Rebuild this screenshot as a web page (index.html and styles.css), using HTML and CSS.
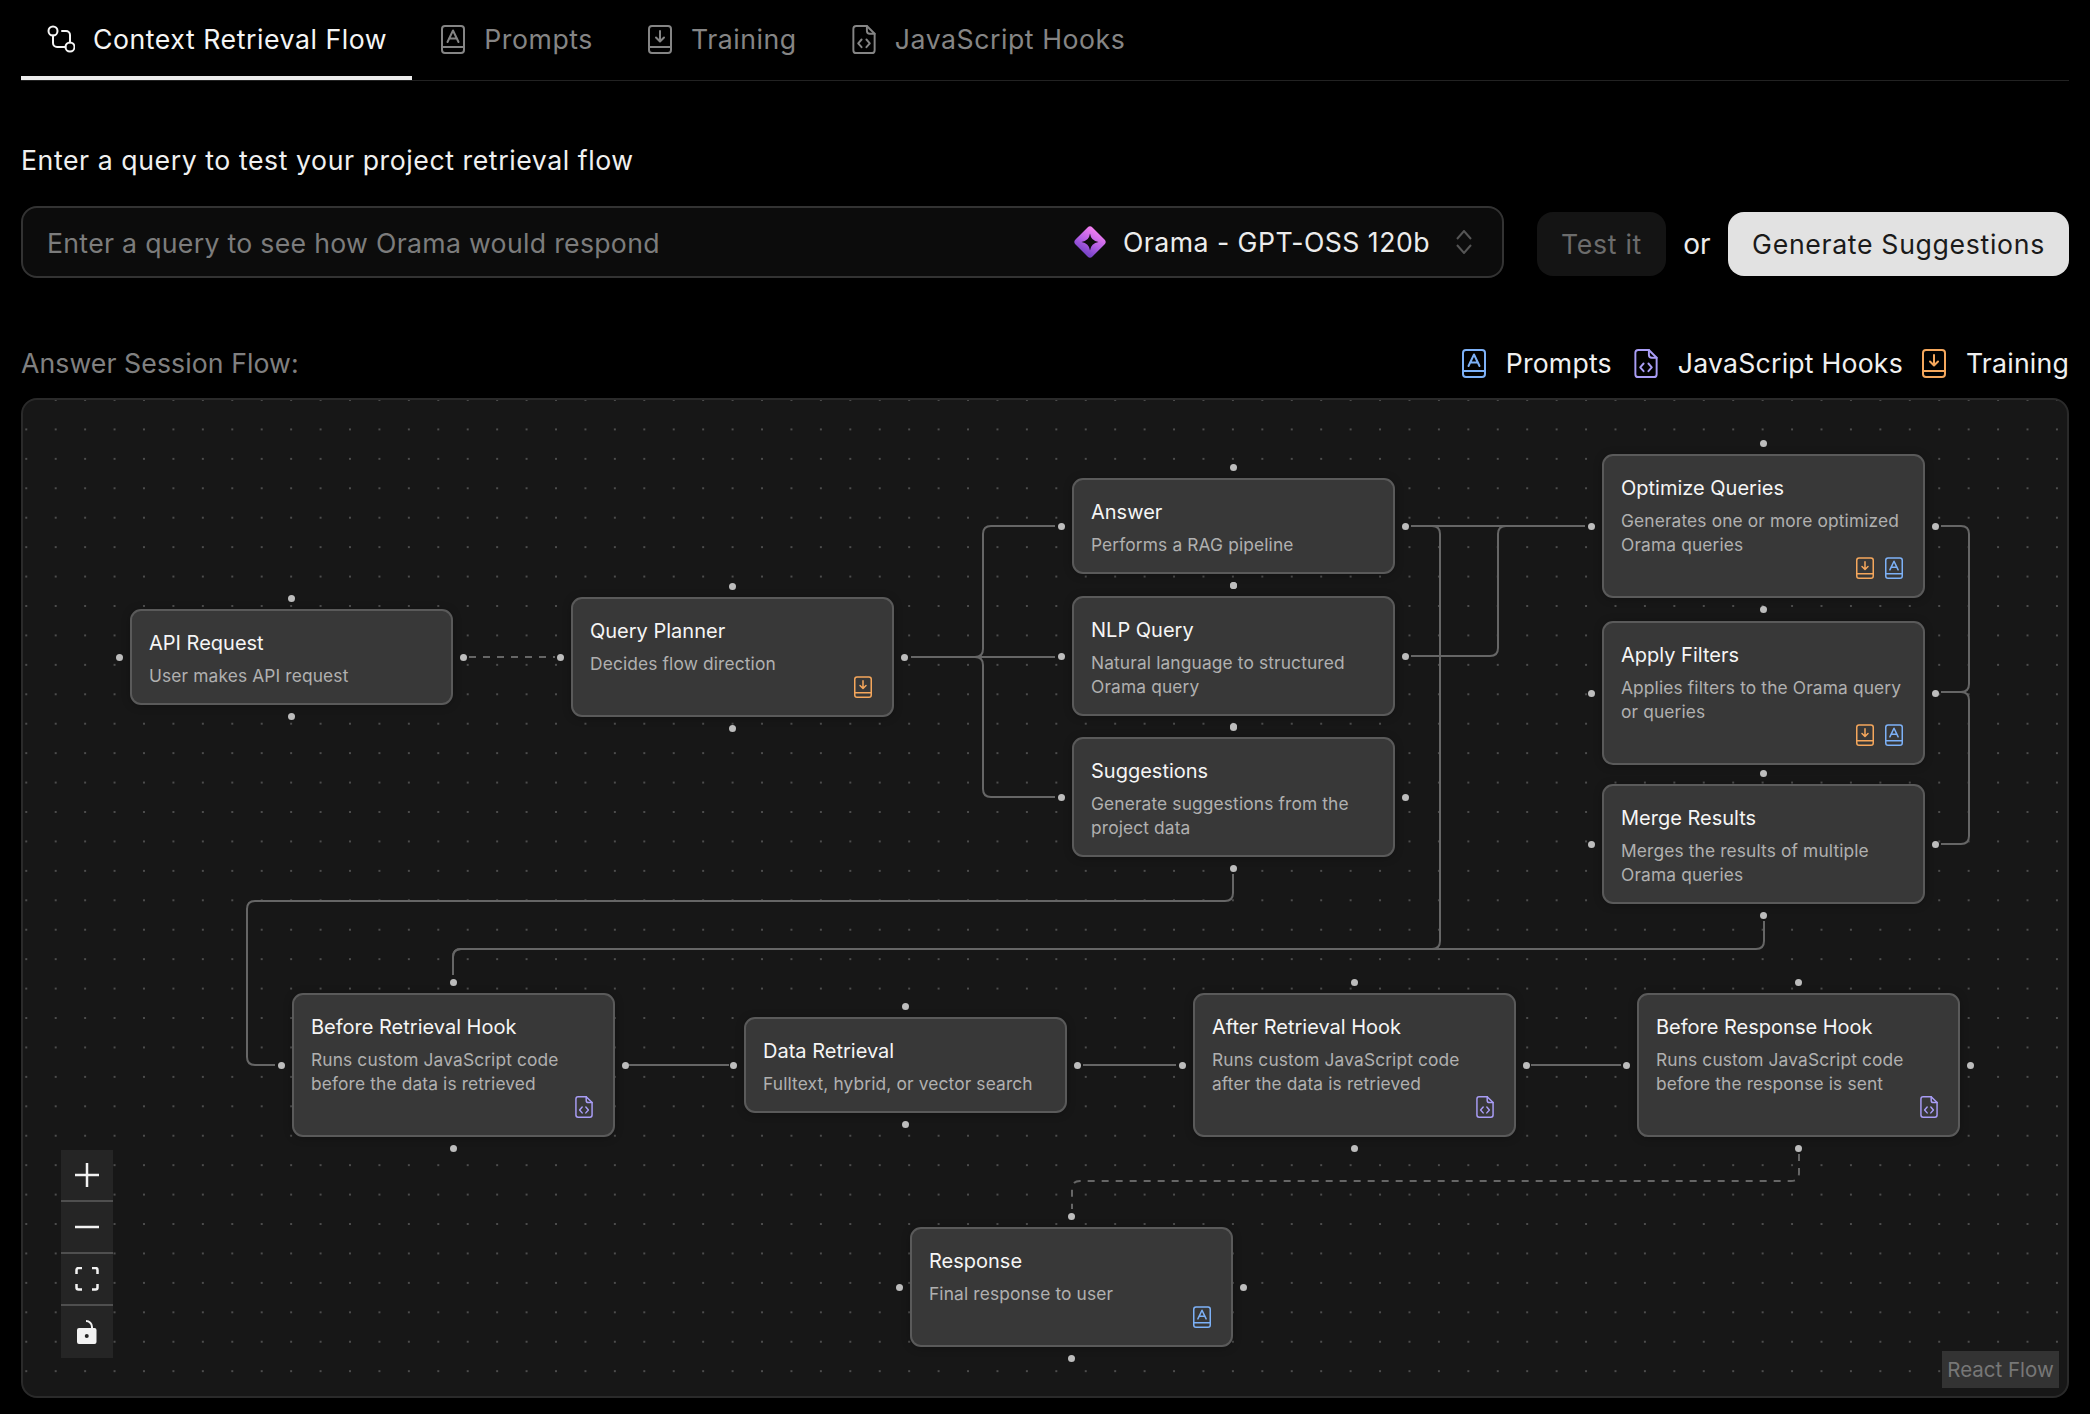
FILE: index.html
```html
<!DOCTYPE html>
<html lang="en">
<head>
    <meta charset="UTF-8">
    <meta name="viewport" content="width=device-width, initial-scale=1.0">
    <title>Context Retrieval Flow</title>
    <link rel="stylesheet" href="styles.css">
</head>
<body>
    <svg class="sprites" width="0" height="0">
        <symbol id="i-book-a" viewBox="0 0 24 29">
            <rect x="1" y="1" width="22" height="27" rx="3"/>
            <path d="M1 22h22M6.5 17 12 5.5 17.5 17M8 13.5h8"/>
        </symbol>
        <symbol id="i-book-down" viewBox="0 0 24 29">
            <rect x="1" y="1" width="22" height="27" rx="3"/>
            <path d="M1 22h22M12 6v10M8 12.5l4 4 4-4"/>
        </symbol>
        <symbol id="i-file-code" viewBox="0 0 24 30">
            <path d="M4 1h11l8 8v17a3 3 0 0 1-3 3H4a3 3 0 0 1-3-3V4a3 3 0 0 1 3-3z"/>
            <path d="M15 1v5a3 3 0 0 0 3 3h5M9.5 15l-3.5 4 3.5 4M14.5 15l3.5 4-3.5 4"/>
        </symbol>
    </svg>

    <main class="page">
        <nav class="tabs">
            <a class="tab active">
                <svg class="tab-flow" viewBox="0 0 28 28"><circle cx="6" cy="6" r="4.5"/><circle cx="23" cy="22" r="4.5"/><path d="M6 10.5V18a4 4 0 0 0 4 4h8.500M15 6h4a4 4 0 0 1 4 4v7.500"/></svg>
                Context Retrieval Flow
            </a>
            <a class="tab"><svg class="icon"><use href="#i-book-a"/></svg>Prompts</a>
            <a class="tab"><svg class="icon"><use href="#i-book-down"/></svg>Training</a>
            <a class="tab"><svg class="icon"><use href="#i-file-code"/></svg>JavaScript Hooks</a>
        </nav>

        <h2 class="query-title">Enter a query to test your project retrieval flow</h2>

        <div class="query-row">
            <div class="query-box">
                <span class="placeholder">Enter a query to see how Orama would respond</span>
                <svg class="model-logo" viewBox="0 0 34 34">
                    <defs>
                        <linearGradient id="logo-grad" x1="0.3" y1="0" x2="0.6" y2="1">
                            <stop offset="0" stop-color="#f07ef0"/>
                            <stop offset="0.55" stop-color="#b45fe6"/>
                            <stop offset="1" stop-color="#7a45c8"/>
                        </linearGradient>
                    </defs>
                    <rect x="5" y="5" width="24" height="24" rx="3.500" transform="rotate(45 17 17)" fill="url(#logo-grad)"/>
                    <path d="M17 8.500Q18 16 25.500 17 18 18 17 25.500 16 18 8.500 17 16 16 17 8.500z" fill="#0c0c0c"/>
                </svg>
                <span class="model-name">Orama - GPT-OSS 120b</span>
                <svg class="model-chevrons" viewBox="0 0 16 24"><path d="M1 9l7-8 7 8M1 15l7 8 7-8"/></svg>
            </div>
            <button class="btn btn-test">Test it</button>
            <span class="or">or</span>
            <button class="btn btn-generate">Generate Suggestions</button>
        </div>

        <div class="flow-head">
            <span class="flow-title">Answer Session Flow:</span>
            <div class="legend">
                <span class="legend-item"><svg class="icon blue"><use href="#i-book-a"/></svg>Prompts</span>
                <span class="legend-item"><svg class="icon violet"><use href="#i-file-code"/></svg>JavaScript Hooks</span>
                <span class="legend-item"><svg class="icon orange"><use href="#i-book-down"/></svg>Training</span>
            </div>
        </div>

        <section class="flow">
            <!-- viewBox is in page coordinates, easier to read off the edges -->
            <svg class="flow-canvas" viewBox="23 400 2044 996">
                <defs>
                    <pattern id="dots" x="55.7" y="517.7" width="29.43" height="29.43" patternUnits="userSpaceOnUse">
                        <circle cx="0" cy="0" r="1" fill="#5e5e5e"/>
                        <circle cx="29.43" cy="0" r="1" fill="#5e5e5e"/>
                        <circle cx="0" cy="29.43" r="1" fill="#5e5e5e"/>
                        <circle cx="29.43" cy="29.43" r="1" fill="#5e5e5e"/>
                    </pattern>
                </defs>
                <rect x="23" y="400" width="2044" height="996" fill="url(#dots)"/>
                <g class="edges">
                    <path class="dashed" d="M469 657H555"/>
                    <path d="M911 657H975q8 0 8-8V534q0-8 8-8H1055"/>
                    <path d="M911 657H1055"/>
                    <path d="M911 657H975q8 0 8 8V789q0 8 8 8H1055"/>
                    <path d="M1411 526H1585"/>
                    <path d="M1411 656H1490q8 0 8-8V534q0-8 8-8H1585"/>
                    <path d="M1411 526H1432q8 0 8 8V941q0 8-8 8H461q-8 0-8 8V975"/>
                    <path d="M1764 921V941q0 8-8 8H461q-8 0-8 8V975"/>
                    <path d="M1233 874V893q0 8-8 8H255q-8 0-8 8V1057q0 8 8 8H275"/>
                    <path d="M1941 526H1961q8 0 8 8V684q0 8-8 8H1941"/>
                    <path d="M1941 844H1961q8 0 8-8V700q0-8-8-8H1941"/>
                    <path d="M629 1065H729"/>
                    <path d="M1083 1065H1176"/>
                    <path d="M1531 1065H1621"/>
                    <path class="dashed" d="M1799 1154V1173q0 8-8 8H1080q-8 0-8 8V1209"/>
                </g>
            </svg>

            <div class="node n-api h-96">
                <h4>API Request</h4>
                <p>User makes API request</p>
                <i class="handle t"></i><i class="handle r"></i><i class="handle b"></i><i class="handle l"></i>
            </div>
            <div class="node n-planner h-120">
                <h4>Query Planner</h4>
                <p>Decides flow direction</p>
                <div class="node-icons"><svg class="icon orange"><use href="#i-book-down"/></svg></div>
                <i class="handle t"></i><i class="handle r"></i><i class="handle b"></i><i class="handle l"></i>
            </div>
            <div class="node n-answer h-96">
                <h4>Answer</h4>
                <p>Performs a RAG pipeline</p>
                <i class="handle t"></i><i class="handle r"></i><i class="handle b"></i><i class="handle l"></i>
            </div>
            <div class="node n-nlp h-120">
                <h4>NLP Query</h4>
                <p>Natural language to structured Orama query</p>
                <i class="handle t"></i><i class="handle r"></i><i class="handle b"></i><i class="handle l"></i>
            </div>
            <div class="node n-suggestions h-120">
                <h4>Suggestions</h4>
                <p>Generate suggestions from the project data</p>
                <i class="handle t"></i><i class="handle r"></i><i class="handle b"></i><i class="handle l"></i>
            </div>
            <div class="node n-optimize h-144">
                <h4>Optimize Queries</h4>
                <p>Generates one or more optimized Orama queries</p>
                <div class="node-icons"><svg class="icon orange"><use href="#i-book-down"/></svg><svg class="icon blue"><use href="#i-book-a"/></svg></div>
                <i class="handle t"></i><i class="handle r"></i><i class="handle b"></i><i class="handle l"></i>
            </div>
            <!-- top and bottom handles of this one sit on its neighbours' handles -->
            <div class="node n-apply h-144">
                <h4>Apply Filters</h4>
                <p>Applies filters to the Orama query or queries</p>
                <div class="node-icons"><svg class="icon orange"><use href="#i-book-down"/></svg><svg class="icon blue"><use href="#i-book-a"/></svg></div>
                <i class="handle r"></i><i class="handle l"></i>
            </div>
            <div class="node n-merge h-120">
                <h4>Merge Results</h4>
                <p>Merges the results of multiple Orama queries</p>
                <i class="handle t"></i><i class="handle r"></i><i class="handle b"></i><i class="handle l"></i>
            </div>
            <div class="node n-before-retrieval h-144">
                <h4>Before Retrieval Hook</h4>
                <p>Runs custom JavaScript code before the data is retrieved</p>
                <div class="node-icons"><svg class="icon violet"><use href="#i-file-code"/></svg></div>
                <i class="handle t"></i><i class="handle r"></i><i class="handle b"></i><i class="handle l"></i>
            </div>
            <div class="node n-data h-96">
                <h4>Data Retrieval</h4>
                <p>Fulltext, hybrid, or vector search</p>
                <i class="handle t"></i><i class="handle r"></i><i class="handle b"></i><i class="handle l"></i>
            </div>
            <div class="node n-after h-144">
                <h4>After Retrieval Hook</h4>
                <p>Runs custom JavaScript code after the data is retrieved</p>
                <div class="node-icons"><svg class="icon violet"><use href="#i-file-code"/></svg></div>
                <i class="handle t"></i><i class="handle r"></i><i class="handle b"></i><i class="handle l"></i>
            </div>
            <div class="node n-before-response h-144">
                <h4>Before Response Hook</h4>
                <p>Runs custom JavaScript code before the response is sent</p>
                <div class="node-icons"><svg class="icon violet"><use href="#i-file-code"/></svg></div>
                <i class="handle t"></i><i class="handle r"></i><i class="handle b"></i><i class="handle l"></i>
            </div>
            <div class="node n-response h-120">
                <h4>Response</h4>
                <p>Final response to user</p>
                <div class="node-icons"><svg class="icon blue"><use href="#i-book-a"/></svg></div>
                <i class="handle t"></i><i class="handle r"></i><i class="handle b"></i><i class="handle l"></i>
            </div>

            <div class="controls">
                <button class="control"><svg viewBox="0 0 24 24"><path d="M12 0v24M0 12h24"/></svg></button>
                <button class="control"><svg viewBox="0 0 24 24"><path d="M0 12h24"/></svg></button>
                <button class="control"><svg viewBox="0 0 24 24"><path d="M1.500 7V3a2 2 0 0 1 2-2h3.500M17 1h3.500a2 2 0 0 1 2 2v4M22.500 17v3.500a2 2 0 0 1-2 2H17M7 22.500H3.500a2 2 0 0 1-2-2V17"/></svg></button>
                <button class="control"><svg viewBox="0 0 24 24"><path class="lock-shackle" d="M11 1a6 6 0 0 1 6 6v1.500"/><path class="lock-body" fill-rule="evenodd" d="M4 8h15.500a2 2 0 0 1 2 2v12a2 2 0 0 1-2 2H4a2 2 0 0 1-2-2V10a2 2 0 0 1 2-2zM11.750 14a2 2 0 1 0 0 4 2 2 0 0 0 0-4z"/></svg></button>
            </div>
            <div class="attribution">React Flow</div>
        </section>
    </main>
</body>
</html>
```

FILE: styles.css
```css
* {
    box-sizing: border-box;
}
body {
    margin: 0;
    background: #000;
    color: #f2f2f2;
    font-family: Inter, "Liberation Sans", sans-serif;
}
.sprites {
    position: absolute;
}
.icon {
    width: 24px;
    height: 29px;
    flex: none;
    fill: none;
    stroke: currentColor;
    stroke-width: 2;
    stroke-linecap: round;
    stroke-linejoin: round;
}
.blue { color: #7db1f7; }
.violet { color: #a99df6; }
.orange { color: #f5a75c; }

.page {
    padding: 0 21px;
}

/* tabs */
.tabs {
    display: flex;
    height: 81px;
    border-bottom: 1px solid #222;
}
.tab {
    display: flex;
    align-items: center;
    gap: 19px;
    height: 80px;
    padding: 2px 26px 0 29px;
    font-size: 26.67px;
    letter-spacing: 0.55px;
    color: #858585;
    border-bottom: 4px solid transparent;
}
.tab.active {
    gap: 18px;
    padding-left: 26px;
    padding-right: 25px;
    color: #f5f5f5;
    border-bottom-color: #ececec;
}
.tab-flow {
    width: 28px;
    height: 28px;
    fill: none;
    stroke: currentColor;
    stroke-width: 2;
    stroke-linecap: round;
}

/* query */
.query-title {
    margin: 61px 0 28px;
    font-size: 26.67px;
    line-height: 36px;
    font-weight: 400;
    letter-spacing: 0.57px;
    color: #f0f0f0;
}
.query-row {
    display: flex;
    align-items: center;
    height: 72px;
}
.query-box {
    display: flex;
    align-items: center;
    width: 1483px;
    height: 72px;
    padding: 0 30px 0 24px;
    background: #0c0c0c;
    border: 2px solid #333;
    border-radius: 16px;
}
.placeholder {
    flex: 1;
    margin-top: 2px;
    font-size: 26.67px;
    letter-spacing: 0.3px;
    color: #7c7c7c;
}
.model-logo {
    width: 34px;
    height: 34px;
    margin-right: 16px;
}
.model-name {
    font-size: 26.67px;
    letter-spacing: 0.47px;
    color: #ececec;
}
.model-chevrons {
    width: 16px;
    height: 24px;
    margin-left: 26px;
    fill: none;
    stroke: #555;
    stroke-width: 2;
}
.btn {
    height: 64px;
    margin-top: 4px;
    border: 0;
    border-radius: 16px;
    font-family: inherit;
    font-size: 26.67px;
    letter-spacing: 0.67px;
}
.btn-test {
    width: 129px;
    margin-left: 33px;
    background: #141414;
    color: #6c6c6c;
}
.or {
    width: 62px;
    margin-top: 4px;
    text-align: center;
    font-size: 28px;
    color: #ececec;
}
.btn-generate {
    width: 341px;
    background: #e2e2e2;
    color: #1a1a1a;
}

/* flow header */
.flow-head {
    display: flex;
    justify-content: space-between;
    align-items: center;
    height: 36px;
    margin: 67px 0 17px;
}
.flow-title {
    font-size: 26.67px;
    letter-spacing: 0.07px;
    color: #808080;
}
.legend {
    display: flex;
    gap: 19px;
}
.legend-item {
    display: flex;
    align-items: center;
    gap: 20px;
    font-size: 26.67px;
    letter-spacing: 0.2px;
    color: #f0f0f0;
}
.legend-item:first-child {
    margin-right: 3px;
}

/* flow canvas */
.flow {
    position: relative;
    height: 1000px;
    background: #171717;
    border: 2px solid #2a2a2a;
    border-radius: 16px;
    overflow: hidden;
}
.flow-canvas {
    position: absolute;
    left: 0;
    top: 0;
    width: 2044px;
    height: 996px;
}
.edges path {
    fill: none;
    stroke: #666;
    stroke-width: 2;
}
.edges .dashed {
    stroke-dasharray: 7 7;
}

.node {
    position: absolute;
    width: 323px;
    padding: 18px 17px 0;
    background: #383838;
    border: 2px solid #5a5a5a;
    border-radius: 11px;
    box-shadow: 0 1px 8px rgba(0, 0, 0, 0.25);
}
.node h4 {
    margin: 0;
    font-size: 20px;
    line-height: 28px;
    font-weight: 400;
    color: #f5f5f5;
}
.node p {
    margin: 7px 0 0;
    font-size: 17.33px;
    line-height: 24px;
    letter-spacing: 0.14px;
    color: #b0b0b0;
}
.node-icons {
    position: absolute;
    right: 20px;
    bottom: 17px;
    display: flex;
    gap: 11px;
}
.node-icons .icon {
    width: 18px;
    height: 22px;
}
.h-96 { height: 96px; }
.h-120 { height: 120px; }
.h-144 { height: 144px; }

.n-api { left: 107px; top: 209px; }
.n-planner { left: 548px; top: 197px; }
.n-answer { left: 1049px; top: 78px; }
.n-nlp { left: 1049px; top: 196px; }
.n-suggestions { left: 1049px; top: 337px; }
.n-optimize { left: 1579px; top: 54px; }
.n-apply { left: 1579px; top: 221px; }
.n-merge { left: 1579px; top: 384px; }
.n-before-retrieval { left: 269px; top: 593px; }
.n-data { left: 721px; top: 617px; }
.n-after { left: 1170px; top: 593px; }
.n-before-response { left: 1614px; top: 593px; }
.n-response { left: 887px; top: 827px; }

.handle {
    position: absolute;
    width: 7px;
    height: 7px;
    border-radius: 50%;
    background: #bdbdbd;
}
.handle.t { left: calc(50% - 3.5px); top: -16px; }
.handle.b { left: calc(50% - 3.5px); bottom: -17px; }
.handle.l { top: calc(50% - 3.5px); left: -16px; }
.handle.r { top: calc(50% - 3.5px); right: -16px; }

/* zoom controls */
.controls {
    position: absolute;
    left: 38px;
    bottom: 38px;
    width: 52px;
    background: #252525;
}
.control {
    display: flex;
    align-items: center;
    justify-content: center;
    width: 100%;
    height: 52px;
    padding: 0;
    background: none;
    border: 0;
    border-bottom: 2px solid #4f4f4f;
}
.control:last-child {
    border-bottom: 0;
}
.control svg {
    width: 24px;
    height: 24px;
    fill: none;
    stroke: #f2f2f2;
    stroke-width: 2.5;
}
.control .lock-body {
    fill: #f2f2f2;
    stroke: none;
}
.control .lock-shackle {
    stroke-width: 2;
}
.attribution {
    position: absolute;
    right: 8px;
    bottom: 8px;
    width: 117px;
    height: 37px;
    line-height: 37px;
    text-align: center;
    font-size: 20.5px;
    color: #777;
    background: #333;
}
```
